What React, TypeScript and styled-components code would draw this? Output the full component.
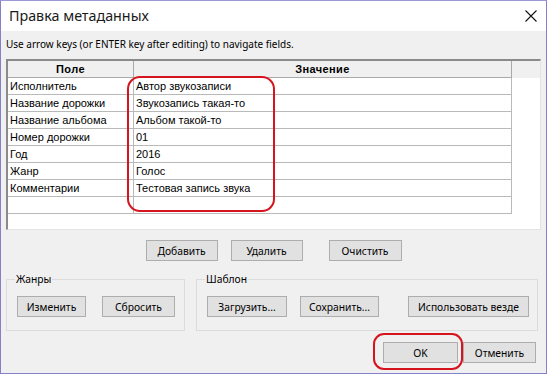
import React from "react";
import styled, { createGlobalStyle } from "styled-components";

const GlobalStyle = createGlobalStyle`
  html, body { margin: 0; padding: 0; background: #f0f0f0; }
  * { box-sizing: border-box; }
`;

const UI = `"Noto Sans", "Open Sans", sans-serif`;
const CELL = `"Liberation Sans", Arial, sans-serif`;

const Window = styled.div`
  position: relative;
  width: 547px;
  height: 374px;
  border: 1px solid #8480cc;
  border-top-color: #9c99d6;
  background: #f0f0f0;
  display: flex;
  flex-direction: column;
  overflow: hidden;
`;

const TitleBar = styled.div`
  height: 30px;
  background: #ffffff;
  display: flex;
  align-items: center;
  justify-content: space-between;
  padding: 0 9px 0 8px;
  flex: none;
`;

const Title = styled.div`
  font-family: ${UI};
  font-size: 14.3px;
  color: #1a1a1a;
  line-height: 20px;
`;

const CloseIcon = styled.svg`
  width: 12px;
  height: 12px;
  display: block;
`;

const Body = styled.div`
  flex: 1;
  display: flex;
  flex-direction: column;
  padding: 0 5px;
`;

const Hint = styled.div`
  height: 28px;
  padding-top: 5px;
  font-family: ${UI};
  font-size: 10px;
  line-height: 16px;
  color: #000;
`;

const GridFrame = styled.div`
  height: 171px;
  background: #ffffff;
  border-top: 2px solid #8a8a8a;
  border-left: 2px solid #8a8a8a;
  border-right: 1px solid #e3e3e3;
  border-bottom: 1px solid #e3e3e3;
`;

const Grid = styled.div`
  display: grid;
  grid-template-columns: 126px 378px 1fr;
  grid-auto-rows: 17px;
`;

const HeadCell = styled.div<{ $filler?: boolean }>`
  background: #f0f0f0;
  border-bottom: ${(p) => (p.$filler ? "none" : "1px solid #a9a9a9")};
  border-right: ${(p) => (p.$filler ? "none" : "1px solid #a9a9a9")};
  font-family: ${CELL};
  font-weight: bold;
  font-size: 11px;
  letter-spacing: 0.4px;
  line-height: 16px;
  text-align: center;
  color: #000;
`;

const Cell = styled.div<{ $filler?: boolean }>`
  border-bottom: ${(p) => (p.$filler ? "none" : "1px solid #b9b9b9")};
  border-right: ${(p) => (p.$filler ? "none" : "1px solid #b9b9b9")};
  font-family: ${CELL};
  font-size: 11px;
  line-height: 16px;
  padding-left: 2px;
  color: #000;
  white-space: nowrap;
`;

const ButtonRow = styled.div`
  margin-top: 10px;
  display: flex;
  justify-content: center;
  gap: 13px;
`;

const Button = styled.button<{ $w: number; $extra?: number }>`
  width: ${(p) => p.$w}px;
  height: 21px;
  margin: 0 0 0 ${(p) => p.$extra ?? 0}px;
  padding: 0;
  border: 1px solid #adadad;
  background: #e1e1e1;
  font-family: ${UI};
  font-size: 10.3px;
  color: #000;
  line-height: 18px;
  flex: none;
`;

const GroupsRow = styled.div`
  margin-top: 10px;
  display: flex;
  gap: 11px;
  padding-right: 3px;
`;

const Group = styled.fieldset<{ $w?: number }>`
  margin: 0;
  border: 1px solid #dcdcdc;
  padding: 9px 0 13px 10px;
  width: ${(p) => (p.$w ? `${p.$w}px` : "auto")};
  flex: ${(p) => (p.$w ? "none" : "1")};
  display: flex;
  align-items: center;
`;

const Legend = styled.legend`
  font-family: ${UI};
  font-size: 10.3px;
  line-height: 16px;
  padding: 0 1px;
  margin-left: -2px;
  color: #000;
`;

const GroupButtons = styled.div`
  display: flex;
  align-items: center;
`;

const Footer = styled.div`
  margin-top: 11px;
  display: flex;
  justify-content: flex-end;
  gap: 5px;
  padding-right: 5px;
`;

const Mark = styled.div<{ $x: number; $y: number; $w: number; $h: number; $r: number }>`
  position: absolute;
  left: ${(p) => p.$x}px;
  top: ${(p) => p.$y}px;
  width: ${(p) => p.$w}px;
  height: ${(p) => p.$h}px;
  border: 2.5px solid #d6141e;
  border-radius: ${(p) => p.$r}px;
  pointer-events: none;
`;

const rows: [string, string][] = [
  ["Исполнитель", "Автор звукозаписи"],
  ["Название дорожки", "Звукозапись такая-то"],
  ["Название альбома", "Альбом такой-то"],
  ["Номер дорожки", "01"],
  ["Год", "2016"],
  ["Жанр", "Голос"],
  ["Комментарии", "Тестовая запись звука"],
  ["", ""],
];

export default function App() {
  return (
    <>
      <GlobalStyle />
      <Window>
        <TitleBar>
          <Title>Правка метаданных</Title>
          <CloseIcon viewBox="0 0 12 12">
            <path d="M0.5 0.5 L11.5 11.5 M11.5 0.5 L0.5 11.5" stroke="#111" strokeWidth="1.1" fill="none" />
          </CloseIcon>
        </TitleBar>
        <Body>
          <Hint>Use arrow keys (or ENTER key after editing) to navigate fields.</Hint>
          <GridFrame>
            <Grid>
              <HeadCell>Поле</HeadCell>
              <HeadCell>Значение</HeadCell>
              <HeadCell $filler />
              {rows.map(([k, v], i) => (
                <React.Fragment key={i}>
                  <Cell>{k}</Cell>
                  <Cell>{v}</Cell>
                  <Cell $filler />
                </React.Fragment>
              ))}
            </Grid>
          </GridFrame>
          <ButtonRow>
            <Button $w={72}>Добавить</Button>
            <Button $w={72}>Удалить</Button>
            <Button $w={73} $extra={13}>Очистить</Button>
          </ButtonRow>
          <GroupsRow>
            <Group $w={179}>
              <Legend>Жанры</Legend>
              <GroupButtons>
                <Button $w={69}>Изменить</Button>
                <Button $w={73} $extra={16}>Сбросить</Button>
              </GroupButtons>
            </Group>
            <Group>
              <Legend>Шаблон</Legend>
              <GroupButtons>
                <Button $w={80}>Загрузить...</Button>
                <Button $w={79} $extra={13}>Сохранить...</Button>
                <Button $w={121} $extra={29}>Использовать везде</Button>
              </GroupButtons>
            </Group>
          </GroupsRow>
          <Footer>
            <Button $w={75}>OK</Button>
            <Button $w={73}>Отменить</Button>
          </Footer>
        </Body>
        <Mark $x={126} $y={75} $w={148} $h={136} $r={13} />
        <Mark $x={372} $y={332} $w={90} $h={37} $r={11} />
      </Window>
    </>
  );
}
